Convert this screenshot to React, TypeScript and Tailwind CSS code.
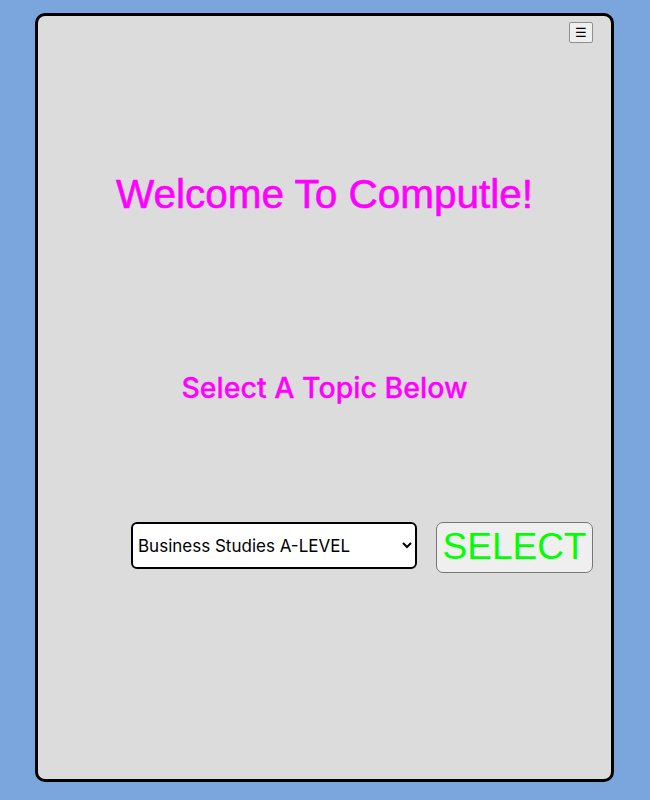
import React, { useState } from "react";

const topics = ["Business Studies A-LEVEL", "Computer Science A-LEVEL", "Economics A-LEVEL"];

export default function App() {
  const [topic, setTopic] = useState(topics[0]);

  return (
    <div className="min-h-[800px] w-full bg-[#7ba6dd] pt-[13px] pl-[35px]">
      <div className="flex h-[769px] w-[579px] flex-col rounded-[10px] border-[3px] border-black bg-[#dcdcdc] font-['Liberation_Sans',Arial,sans-serif]">
        {/* menu */}
        <div className="flex justify-end pt-[6px] pr-[18px]">
          <button className="flex h-[21px] w-[24px] items-center justify-center rounded-[2px] border border-[#8f8f8f] bg-[#efefef] text-[13px] leading-none text-black">
            ☰
          </button>
        </div>

        <h1 className="mt-[128px] text-center text-[40.5px] leading-[46px] text-[#ff00ff] [-webkit-text-stroke:0.6px_#ff00ff]">
          Welcome To Computle!
        </h1>

        <h2 className="mt-[154px] text-center font-['Inter',sans-serif] text-[28.5px] font-medium leading-[34px] text-[#ff00ff] [-webkit-text-stroke:0.3px_#ff00ff]">
          Select A Topic Below
        </h2>

        <div className="mt-[117px] flex items-start gap-[19px] pl-[93px]">
          <select
            value={topic}
            onChange={(e) => setTopic(e.target.value)}
            className="h-[47px] w-[286px] rounded-[6px] border-2 border-black bg-white pl-[1px] font-['Inter',sans-serif] text-[17px] text-black"
          >
            {topics.map((t) => (
              <option key={t}>{t}</option>
            ))}
          </select>
          <button className="h-[51px] w-[157px] rounded-[7px] border border-[#767676] bg-[#efefef] pb-[2px] text-[37px] leading-none text-[#00ff00]">
            SELECT
          </button>
        </div>
      </div>
    </div>
  );
}
